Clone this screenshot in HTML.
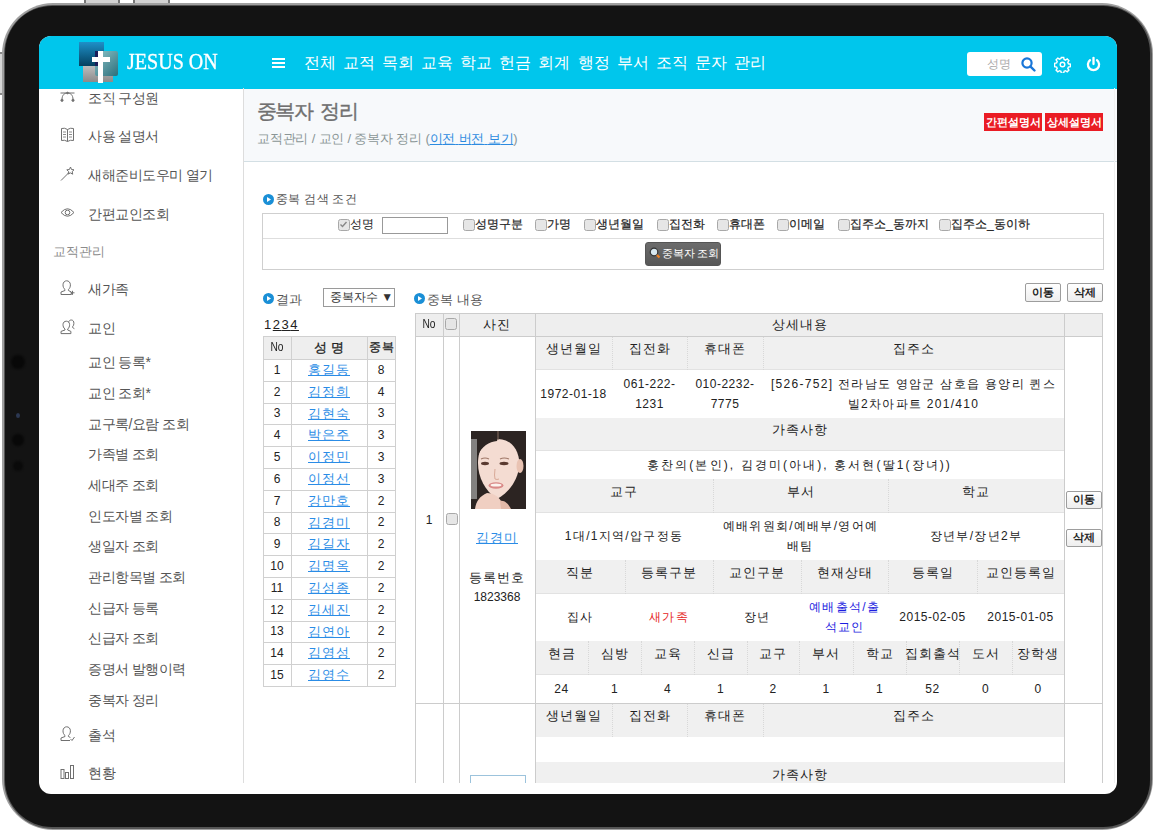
<!DOCTYPE html>
<html><head><meta charset="utf-8">
<style>
*{box-sizing:border-box;margin:0;padding:0}
html,body{width:1155px;height:832px;overflow:hidden;background:#fff;font-family:"Liberation Sans",sans-serif}
.a{position:absolute}
:root{--ls:0px}
i{font-style:normal;display:inline-block;width:calc(1em + var(--ls));text-align:center;text-decoration:inherit}
#tablet{left:5px;top:6px;width:1145px;height:821px;border-radius:47px;background:#131313}
#screen{left:39px;top:36px;width:1078px;height:758px;border-radius:12px;background:#fff;overflow:hidden}
#inner{left:-39px;top:-36px;width:1155px;height:832px}
#hdr{left:39px;top:36px;width:1078px;height:53px;background:#00c6ec}
.menu{top:52px;height:22px;line-height:22px;color:#fff;font-size:16px;white-space:nowrap}
.side{left:88px;height:20px;line-height:20px;font-size:14px;color:#555;white-space:nowrap;letter-spacing:-0.5px;--ls:-0.5px}
.t{display:flex;align-items:center;justify-content:center;white-space:nowrap;line-height:1.2}
.ico{left:60px;width:15px;height:15px}
</style></head>
<body>
<div class="a" style="left:84px;top:0;width:36px;height:5px;background:#d2d2d2;border-left:2px solid #777;border-right:2px solid #777"></div>
<div class="a" style="left:133px;top:0;width:37px;height:5px;background:#d2d2d2;border-left:2px solid #777;border-right:2px solid #777"></div>
<div class="a" style="left:0;top:52px;width:4px;height:43px;background:#d6d6d6;border-top:2px solid #888;border-bottom:2px solid #888"></div>
<div class="a" style="left:2px;top:3px;width:1151px;height:827px;border-radius:51px;background:#a0a0a0;filter:blur(0.7px)"></div><div class="a" style="left:3.5px;top:4.5px;width:1148px;height:824px;border-radius:49px;background:#555;filter:blur(0.6px)"></div><div id="tablet" class="a"></div>
<div class="a" style="left:11px;top:355px;width:14px;height:14px;border-radius:50%;background:#080808;filter:blur(1px)"></div>
<div class="a" style="left:16px;top:413px;width:4px;height:5px;border-radius:50%;background:#2c3852;filter:blur(0.6px)"></div>
<div class="a" style="left:12px;top:434px;width:12px;height:12px;border-radius:50%;background:#080808;filter:blur(1px)"></div>
<div class="a" style="left:13px;top:461px;width:10px;height:10px;border-radius:50%;background:#0a0a0a;filter:blur(1px)"></div>
<div id="screen" class="a">
<div id="inner" class="a">
  <!-- header -->
  <div id="hdr" class="a"></div>
  <!-- logo -->
  <div class="a" style="left:79px;top:42px;width:25px;height:24px;background:linear-gradient(#1e90c8,#04405f)"></div>
  <div class="a" style="left:83px;top:66px;width:30px;height:16px;background:linear-gradient(#bdbdbd,#8a8a8a)"></div>
  <div class="a" style="left:95px;top:51px;width:23px;height:25px;border-radius:2px;background:linear-gradient(135deg,#8fc4c8,#2b6f7c)"></div>
  <div class="a" style="left:95px;top:51px;width:4px;height:15px;background:#1b1e5a"></div>
  <div class="a" style="left:98px;top:51px;width:5px;height:32px;background:#fff"></div>
  <div class="a" style="left:92px;top:57px;width:18px;height:5px;background:#fff"></div>
  <div class="a" style="left:127px;top:46px;height:30px;line-height:30px;font-family:'Liberation Serif',serif;font-size:24px;color:#fff;letter-spacing:0px;--ls:0px;transform:scaleX(0.835);transform-origin:0 0;-webkit-text-stroke:0.35px #fff">JESUS ON</div>
  <!-- hamburger -->
  <div class="a" style="left:272px;top:58px;width:13px;height:2px;background:#fff;box-shadow:0 4px 0 #fff,0 8px 0 #fff"></div>
  <div class="a menu" style="left:304px"><i>전</i><i>체</i></div>
  <div class="a menu" style="left:343px"><i>교</i><i>적</i></div>
  <div class="a menu" style="left:382px"><i>목</i><i>회</i></div>
  <div class="a menu" style="left:421px"><i>교</i><i>육</i></div>
  <div class="a menu" style="left:460px"><i>학</i><i>교</i></div>
  <div class="a menu" style="left:499px"><i>헌</i><i>금</i></div>
  <div class="a menu" style="left:538px"><i>회</i><i>계</i></div>
  <div class="a menu" style="left:578px"><i>행</i><i>정</i></div>
  <div class="a menu" style="left:617px"><i>부</i><i>서</i></div>
  <div class="a menu" style="left:656px"><i>조</i><i>직</i></div>
  <div class="a menu" style="left:695px"><i>문</i><i>자</i></div>
  <div class="a menu" style="left:734px"><i>관</i><i>리</i></div>
  <!-- search -->
  <div class="a" style="left:967px;top:52px;width:75px;height:24px;background:#fff;border-radius:3px"></div>
  <div class="a" style="left:987px;top:55px;height:18px;line-height:18px;font-size:12px;color:#aaa"><i>성</i><i>명</i></div>
  <svg class="a" style="left:1020px;top:56px" width="17" height="17" viewBox="0 0 17 17"><circle cx="7" cy="7" r="4.6" fill="none" stroke="#1976d8" stroke-width="2.2"/><line x1="10.3" y1="10.3" x2="14.5" y2="14.5" stroke="#1976d8" stroke-width="2.4" stroke-linecap="round"/></svg>
  <svg class="a" style="left:1054px;top:56px" width="17" height="17" viewBox="0 0 17 17"><g fill="none" stroke="#fff" stroke-width="1.4"><circle cx="8.5" cy="8.5" r="2.3"/><path d="M7.3 1.5h2.4l.4 2 1.4.6 1.7-1.1 1.7 1.7-1.1 1.7.6 1.4 2 .4v2.4l-2 .4-.6 1.4 1.1 1.7-1.7 1.7-1.7-1.1-1.4.6-.4 2H7.3l-.4-2-1.4-.6-1.7 1.1-1.7-1.7 1.1-1.7-.6-1.4-2-.4V7.3l2-.4.6-1.4-1.1-1.7 1.7-1.7 1.7 1.1 1.4-.6z"/></g></svg>
  <svg class="a" style="left:1085px;top:56px" width="17" height="17" viewBox="0 0 17 17"><path d="M5 4.2A5.6 5.6 0 1 0 12 4.2" fill="none" stroke="#fff" stroke-width="2.3" stroke-linecap="round"/><line x1="8.5" y1="1.8" x2="8.5" y2="8" stroke="#fff" stroke-width="2.3" stroke-linecap="round"/></svg>

  <!-- sidebar -->
  <div class="a" style="left:243px;top:88px;width:1px;height:695px;background:#ddd"></div>
  <div class="a side" style="top:88px"><i>조</i><i>직</i> <i>구</i><i>성</i><i>원</i></div>
  <div class="a side" style="top:126px"><i>사</i><i>용</i> <i>설</i><i>명</i><i>서</i></div>
  <div class="a side" style="top:165px"><i>새</i><i>해</i><i>준</i><i>비</i><i>도</i><i>우</i><i>미</i> <i>열</i><i>기</i></div>
  <div class="a side" style="top:204px"><i>간</i><i>편</i><i>교</i><i>인</i><i>조</i><i>회</i></div>
  <div class="a side" style="left:53px;top:242px;font-size:13px;color:#8c8c8c;letter-spacing:0px;--ls:0px"><i>교</i><i>적</i><i>관</i><i>리</i></div>
  <div class="a side" style="top:279px"><i>새</i><i>가</i><i>족</i></div>
  <div class="a side" style="top:318px"><i>교</i><i>인</i></div>
  <div class="a side" style="top:352px"><i>교</i><i>인</i> <i>등</i><i>록</i>*</div>
  <div class="a side" style="top:383px"><i>교</i><i>인</i> <i>조</i><i>회</i>*</div>
  <div class="a side" style="top:414px"><i>교</i><i>구</i><i>록</i>/<i>요</i><i>람</i> <i>조</i><i>회</i></div>
  <div class="a side" style="top:444px"><i>가</i><i>족</i><i>별</i> <i>조</i><i>회</i></div>
  <div class="a side" style="top:475px"><i>세</i><i>대</i><i>주</i> <i>조</i><i>회</i></div>
  <div class="a side" style="top:506px"><i>인</i><i>도</i><i>자</i><i>별</i> <i>조</i><i>회</i></div>
  <div class="a side" style="top:536px"><i>생</i><i>일</i><i>자</i> <i>조</i><i>회</i></div>
  <div class="a side" style="top:567px"><i>관</i><i>리</i><i>항</i><i>목</i><i>별</i> <i>조</i><i>회</i></div>
  <div class="a side" style="top:598px"><i>신</i><i>급</i><i>자</i> <i>등</i><i>록</i></div>
  <div class="a side" style="top:628px"><i>신</i><i>급</i><i>자</i> <i>조</i><i>회</i></div>
  <div class="a side" style="top:659px"><i>증</i><i>명</i><i>서</i> <i>발</i><i>행</i><i>이</i><i>력</i></div>
  <div class="a side" style="top:690px"><i>중</i><i>복</i><i>자</i> <i>정</i><i>리</i></div>
  <div class="a side" style="top:725px"><i>출</i><i>석</i></div>
  <div class="a side" style="top:763px"><i>현</i><i>황</i></div>

  <!-- page header -->
  <div class="a" style="left:244px;top:89px;width:873px;height:73px;background:#f7f9fb;border-bottom:1px solid #d3dfe4"></div>
  <div class="a" style="left:257px;top:98px;height:26px;line-height:26px;font-size:20px;letter-spacing:-1.6px;--ls:-1.6px;word-spacing:4px;font-weight:normal;color:#707070;-webkit-text-stroke:0.4px #707070"><i>중</i><i>복</i><i>자</i> <i>정</i><i>리</i></div>
  <div class="a" style="left:257px;top:130px;height:18px;line-height:18px;font-size:13px;letter-spacing:-0.18px;--ls:-0.18px;color:#8a9696"><i>교</i><i>적</i><i>관</i><i>리</i> / <i>교</i><i>인</i> / <i>중</i><i>복</i><i>자</i> <i>정</i><i>리</i> (<span style="color:#2d8be0;text-decoration:underline"><i>이</i><i>전</i> <i>버</i><i>전</i> <i>보</i><i>기</i></span>)</div>
  <div class="a" style="left:984px;top:113px;width:58px;height:18px;background:#ea1c24;color:#fff;font-size:11px;font-weight:bold;line-height:18px;text-align:center"><i>간</i><i>편</i><i>설</i><i>명</i><i>서</i></div>
  <div class="a" style="left:1045px;top:113px;width:58px;height:18px;background:#ea1c24;color:#fff;font-size:11px;font-weight:bold;line-height:18px;text-align:center"><i>상</i><i>세</i><i>설</i><i>명</i><i>서</i></div>

  <div class="a" id="content" style="left:0;top:0;width:1155px;height:783px;overflow:hidden">
<svg class="a" style="left:60px;top:91px" width="15" height="11" viewBox="0 0 15 11"><g fill="none" stroke="#707070" stroke-width="1"><path d="M0.5 2h14"/><path d="M2 8.5C2 4 4.5 2 7.5 2S13 4 13 8.5"/><circle cx="2" cy="9.3" r="1.1" fill="#707070"/><circle cx="13" cy="9.3" r="1.1" fill="#707070"/><circle cx="7.5" cy="2" r="0.8" fill="#707070"/></g></svg>
<svg class="a" style="left:60px;top:127px" width="15" height="16" viewBox="0 0 15 16"><g fill="none" stroke="#707070" stroke-width="1"><path d="M1.5 1.5q3-1 6 1q3-2 6-1v12q-3-1-6 1q-3-2-6-1z"/><path d="M7.5 2.5v12"/><path d="M3 5h3M3 7.5h3M3 10h3M9 5h3M9 7.5h3M9 10h3" stroke-width="0.8"/></g></svg>
<svg class="a" style="left:60px;top:166px" width="15" height="16" viewBox="0 0 15 16"><g fill="none" stroke="#707070" stroke-width="1"><path d="M1 14.5L9 6.5"/><path d="M10.5 1l1 2.5 2.5.3-1.8 1.8.5 2.6-2.3-1.3-2.3 1.2.5-2.6L6.8 3.8l2.6-.3z"/></g></svg>
<svg class="a" style="left:60px;top:207px" width="15" height="11" viewBox="0 0 15 11"><g fill="none" stroke="#707070" stroke-width="1"><path d="M1 5.5Q7.5 -2 14 5.5Q7.5 13 1 5.5z"/><circle cx="7.5" cy="5.5" r="2.3"/></g></svg>
<svg class="a" style="left:60px;top:280px" width="15" height="16" viewBox="0 0 15 16"><g fill="none" stroke="#707070" stroke-width="1"><path d="M5 9.5C3.5 8.5 3 6.5 3 4.8 3 2.3 4.8 0.8 6.7 0.8S10.4 2.3 10.4 4.8c0 1.7-.5 3.7-2 4.7v1l3 1.5v2.5H1v-2.5l4-1.5z"/><path d="M10.5 12.8h4M12.5 10.8v4" stroke-width="1"/></g></svg>
<svg class="a" style="left:60px;top:319px" width="15" height="16" viewBox="0 0 15 16"><g fill="none" stroke="#707070" stroke-width="1"><path d="M8.5 3.2C9 1.7 10 1 11.3 1c1.6 0 2.6 1.3 2.6 3.3 0 1.3-.4 2.6-1.3 3.4v.8l1.8 1.2"/><path d="M5 10C3.5 9 3 7.2 3 5.6 3 3.4 4.5 2.2 6.3 2.2S9.6 3.4 9.6 5.6c0 1.6-.5 3.4-1.9 4.4v1l3.2 1.4v2.2H1v-2.2l4-1.4z"/></g></svg>
<svg class="a" style="left:60px;top:726px" width="15" height="16" viewBox="0 0 15 16"><g fill="none" stroke="#707070" stroke-width="1"><path d="M5 9.5C3.5 8.5 3 6.5 3 4.8 3 2.3 4.8 0.8 6.7 0.8S10.4 2.3 10.4 4.8c0 1.7-.5 3.7-2 4.7v1l2 1"/><path d="M5 9.5v1l-4 1.5v2.5h9"/><path d="M10.5 13l1.5 1.5 2.5-3.5" stroke-width="1"/></g></svg>
<svg class="a" style="left:60px;top:765px" width="15" height="15" viewBox="0 0 15 15"><g fill="none" stroke="#707070" stroke-width="1"><rect x="1" y="4.5" width="3" height="9"/><rect x="5.5" y="7.5" width="3" height="6"/><rect x="10.5" y="0.5" width="3" height="13"/></g></svg>
<svg class="a" style="left:263px;top:194px" width="11" height="11" viewBox="0 0 11 11"><circle cx="5.5" cy="5.5" r="5.5" fill="#1a8fd6"/><path d="M4 3v5l4-2.5z" fill="#fff"/></svg>
<div class="a t" style="left:276px;top:190px;width:124px;height:18px;text-align:left;justify-content:flex-start;color:#555;font-size:12px;letter-spacing:0.3px;--ls:0.3px"><span><i>중</i><i>복</i> <i>검</i><i>색</i> <i>조</i><i>건</i></span></div>
<div class="a" style="left:262px;top:213px;width:842px;height:57px;border:1px solid #cfcfcf"></div>
<div class="a" style="left:263px;top:238px;width:840px;height:1px;background:#dedede"></div>
<svg class="a" style="left:338px;top:219px" width="12" height="12" viewBox="0 0 12 12"><rect x="0.5" y="0.5" width="11" height="11" rx="2" fill="#e6e6e6" stroke="#a8a8a8"/><path d="M2.5 5.5l2 2 4-4.5" fill="none" stroke="#888" stroke-width="1.4"/></svg>
<div class="a t" style="left:350px;top:214px;width:30px;height:20px;text-align:left;justify-content:flex-start;color:#222;font-size:12px"><span><i>성</i><i>명</i></span></div>
<div class="a" style="left:382px;top:217px;width:66px;height:17px;border:1px solid #999;background:#fff"></div>
<svg class="a" style="left:463px;top:219px" width="12" height="12" viewBox="0 0 12 12"><rect x="0.5" y="0.5" width="11" height="11" rx="2" fill="#e6e6e6" stroke="#a8a8a8"/></svg>
<div class="a t" style="left:475px;top:214px;width:88px;height:20px;text-align:left;justify-content:flex-start;color:#222;font-size:12px;-webkit-text-stroke:0.2px #222"><span><i>성</i><i>명</i><i>구</i><i>분</i></span></div>
<svg class="a" style="left:535px;top:219px" width="12" height="12" viewBox="0 0 12 12"><rect x="0.5" y="0.5" width="11" height="11" rx="2" fill="#e6e6e6" stroke="#a8a8a8"/></svg>
<div class="a t" style="left:547px;top:214px;width:88px;height:20px;text-align:left;justify-content:flex-start;color:#222;font-size:12px;-webkit-text-stroke:0.2px #222"><span><i>가</i><i>명</i></span></div>
<svg class="a" style="left:584px;top:219px" width="12" height="12" viewBox="0 0 12 12"><rect x="0.5" y="0.5" width="11" height="11" rx="2" fill="#e6e6e6" stroke="#a8a8a8"/></svg>
<div class="a t" style="left:596px;top:214px;width:88px;height:20px;text-align:left;justify-content:flex-start;color:#222;font-size:12px;-webkit-text-stroke:0.2px #222"><span><i>생</i><i>년</i><i>월</i><i>일</i></span></div>
<svg class="a" style="left:657px;top:219px" width="12" height="12" viewBox="0 0 12 12"><rect x="0.5" y="0.5" width="11" height="11" rx="2" fill="#e6e6e6" stroke="#a8a8a8"/></svg>
<div class="a t" style="left:669px;top:214px;width:88px;height:20px;text-align:left;justify-content:flex-start;color:#222;font-size:12px;-webkit-text-stroke:0.2px #222"><span><i>집</i><i>전</i><i>화</i></span></div>
<svg class="a" style="left:717px;top:219px" width="12" height="12" viewBox="0 0 12 12"><rect x="0.5" y="0.5" width="11" height="11" rx="2" fill="#e6e6e6" stroke="#a8a8a8"/></svg>
<div class="a t" style="left:729px;top:214px;width:88px;height:20px;text-align:left;justify-content:flex-start;color:#222;font-size:12px;-webkit-text-stroke:0.2px #222"><span><i>휴</i><i>대</i><i>폰</i></span></div>
<svg class="a" style="left:777px;top:219px" width="12" height="12" viewBox="0 0 12 12"><rect x="0.5" y="0.5" width="11" height="11" rx="2" fill="#e6e6e6" stroke="#a8a8a8"/></svg>
<div class="a t" style="left:789px;top:214px;width:88px;height:20px;text-align:left;justify-content:flex-start;color:#222;font-size:12px;-webkit-text-stroke:0.2px #222"><span><i>이</i><i>메</i><i>일</i></span></div>
<svg class="a" style="left:838px;top:219px" width="12" height="12" viewBox="0 0 12 12"><rect x="0.5" y="0.5" width="11" height="11" rx="2" fill="#e6e6e6" stroke="#a8a8a8"/></svg>
<div class="a t" style="left:850px;top:214px;width:88px;height:20px;text-align:left;justify-content:flex-start;color:#222;font-size:12px;-webkit-text-stroke:0.2px #222"><span><i>집</i><i>주</i><i>소</i>_<i>동</i><i>까</i><i>지</i></span></div>
<svg class="a" style="left:939px;top:219px" width="12" height="12" viewBox="0 0 12 12"><rect x="0.5" y="0.5" width="11" height="11" rx="2" fill="#e6e6e6" stroke="#a8a8a8"/></svg>
<div class="a t" style="left:951px;top:214px;width:88px;height:20px;text-align:left;justify-content:flex-start;color:#222;font-size:12px;-webkit-text-stroke:0.2px #222"><span><i>집</i><i>주</i><i>소</i>_<i>동</i><i>이</i><i>하</i></span></div>
<div class="a" style="left:645px;top:242px;width:76px;height:24px;background:linear-gradient(#6c6c6c,#575757);border-radius:3px;border:1px solid #555"></div>
<svg class="a" style="left:649px;top:247px" width="13" height="13" viewBox="0 0 13 13"><circle cx="5" cy="5" r="3.8" fill="#d8e8f0" stroke="#333" stroke-width="1.2"/><line x1="8" y1="8" x2="10.5" y2="10.5" stroke="#f08020" stroke-width="2.2"/></svg>
<div class="a t" style="left:662px;top:244px;width:68px;height:20px;text-align:left;justify-content:flex-start;color:#fff;font-size:11px;letter-spacing:-0.2px;--ls:-0.2px"><span><i>중</i><i>복</i><i>자</i> <i>조</i><i>회</i></span></div>
<svg class="a" style="left:263px;top:293px" width="11" height="11" viewBox="0 0 11 11"><circle cx="5.5" cy="5.5" r="5.5" fill="#1a8fd6"/><path d="M4 3v5l4-2.5z" fill="#fff"/></svg>
<div class="a t" style="left:276px;top:290px;width:44px;height:19px;text-align:left;justify-content:flex-start;color:#555;font-size:13px"><span><i>결</i><i>과</i></span></div>
<div class="a" style="left:323px;top:288px;width:72px;height:19px;border:1px solid #9a9a9a;background:#fff"></div>
<div class="a t" style="left:330px;top:289px;width:63px;height:17px;text-align:left;justify-content:flex-start;color:#333;font-size:12px"><span><i>중</i><i>복</i><i>자</i><i>수</i> ▼</span></div>
<svg class="a" style="left:414px;top:293px" width="11" height="11" viewBox="0 0 11 11"><circle cx="5.5" cy="5.5" r="5.5" fill="#1a8fd6"/><path d="M4 3v5l4-2.5z" fill="#fff"/></svg>
<div class="a t" style="left:427px;top:290px;width:73px;height:19px;text-align:left;justify-content:flex-start;color:#555;font-size:13px"><span><i>중</i><i>복</i> <i>내</i><i>용</i></span></div>
<div class="a t" style="left:264px;top:315px;width:46px;height:19px;text-align:left;justify-content:flex-start;color:#222;font-size:13px;letter-spacing:1.5px;--ls:1.5px"><span>1<u>2</u><u>3</u><u>4</u></span></div>
<div class="a" style="left:1025px;top:283px;width:36px;height:19px;border:1px solid #9d9d9d;border-radius:2px;background:linear-gradient(#fff,#eee)"></div>
<div class="a t" style="left:1025px;top:283px;width:36px;height:19px;text-align:center;justify-content:center;color:#222;font-size:11px;font-weight:bold"><span><i>이</i><i>동</i></span></div>
<div class="a" style="left:1067px;top:283px;width:36px;height:19px;border:1px solid #9d9d9d;border-radius:2px;background:linear-gradient(#fff,#eee)"></div>
<div class="a t" style="left:1067px;top:283px;width:36px;height:19px;text-align:center;justify-content:center;color:#222;font-size:11px;font-weight:bold"><span><i>삭</i><i>제</i></span></div>
<div class="a" style="left:263px;top:336px;width:133px;height:23px;background:#eee"></div>
<div class="a" style="left:263px;top:336px;width:133px;height:1px;background:#d0d0d0"></div>
<div class="a" style="left:263px;top:359px;width:133px;height:1px;background:#d0d0d0"></div>
<div class="a" style="left:263px;top:381px;width:133px;height:1px;background:#d0d0d0"></div>
<div class="a" style="left:263px;top:403px;width:133px;height:1px;background:#d0d0d0"></div>
<div class="a" style="left:263px;top:424px;width:133px;height:1px;background:#d0d0d0"></div>
<div class="a" style="left:263px;top:446px;width:133px;height:1px;background:#d0d0d0"></div>
<div class="a" style="left:263px;top:468px;width:133px;height:1px;background:#d0d0d0"></div>
<div class="a" style="left:263px;top:490px;width:133px;height:1px;background:#d0d0d0"></div>
<div class="a" style="left:263px;top:512px;width:133px;height:1px;background:#d0d0d0"></div>
<div class="a" style="left:263px;top:533px;width:133px;height:1px;background:#d0d0d0"></div>
<div class="a" style="left:263px;top:555px;width:133px;height:1px;background:#d0d0d0"></div>
<div class="a" style="left:263px;top:577px;width:133px;height:1px;background:#d0d0d0"></div>
<div class="a" style="left:263px;top:599px;width:133px;height:1px;background:#d0d0d0"></div>
<div class="a" style="left:263px;top:621px;width:133px;height:1px;background:#d0d0d0"></div>
<div class="a" style="left:263px;top:642px;width:133px;height:1px;background:#d0d0d0"></div>
<div class="a" style="left:263px;top:664px;width:133px;height:1px;background:#d0d0d0"></div>
<div class="a" style="left:263px;top:686px;width:133px;height:1px;background:#d0d0d0"></div>
<div class="a" style="left:263px;top:336px;width:1px;height:351px;background:#d0d0d0"></div>
<div class="a" style="left:291px;top:336px;width:1px;height:351px;background:#d0d0d0"></div>
<div class="a" style="left:367px;top:336px;width:1px;height:351px;background:#d0d0d0"></div>
<div class="a" style="left:395px;top:336px;width:1px;height:351px;background:#d0d0d0"></div>
<div class="a t" style="left:263px;top:336px;width:28px;height:23px;text-align:center;justify-content:center;color:#222;font-size:12px;transform:scaleX(0.85)"><span>No</span></div>
<div class="a t" style="left:291px;top:336px;width:76px;height:23px;text-align:center;justify-content:center;color:#222;font-size:13px;-webkit-text-stroke:0.3px #222"><span><i>성</i> <i>명</i></span></div>
<div class="a t" style="left:367px;top:336px;width:28px;height:23px;text-align:center;justify-content:center;color:#222;font-size:12px;-webkit-text-stroke:0.3px #222;letter-spacing:-1px;--ls:-1px"><span><i>중</i> <i>복</i></span></div>
<div class="a t" style="left:263px;top:359px;width:28px;height:22px;text-align:center;justify-content:center;color:#222;font-size:12px"><span>1</span></div>
<div class="a t" style="left:291px;top:359px;width:76px;height:22px;text-align:center;justify-content:center;color:#2a8ce6;font-size:13px;text-decoration:underline;letter-spacing:1px;--ls:1px"><span style="text-decoration:underline"><i>홍</i><i>길</i><i>동</i></span></div>
<div class="a t" style="left:367px;top:359px;width:28px;height:22px;text-align:center;justify-content:center;color:#222;font-size:12px"><span>8</span></div>
<div class="a t" style="left:263px;top:381px;width:28px;height:22px;text-align:center;justify-content:center;color:#222;font-size:12px"><span>2</span></div>
<div class="a t" style="left:291px;top:381px;width:76px;height:22px;text-align:center;justify-content:center;color:#2a8ce6;font-size:13px;text-decoration:underline;letter-spacing:1px;--ls:1px"><span style="text-decoration:underline"><i>김</i><i>정</i><i>희</i></span></div>
<div class="a t" style="left:367px;top:381px;width:28px;height:22px;text-align:center;justify-content:center;color:#222;font-size:12px"><span>4</span></div>
<div class="a t" style="left:263px;top:403px;width:28px;height:21px;text-align:center;justify-content:center;color:#222;font-size:12px"><span>3</span></div>
<div class="a t" style="left:291px;top:403px;width:76px;height:21px;text-align:center;justify-content:center;color:#2a8ce6;font-size:13px;text-decoration:underline;letter-spacing:1px;--ls:1px"><span style="text-decoration:underline"><i>김</i><i>현</i><i>숙</i></span></div>
<div class="a t" style="left:367px;top:403px;width:28px;height:21px;text-align:center;justify-content:center;color:#222;font-size:12px"><span>3</span></div>
<div class="a t" style="left:263px;top:424px;width:28px;height:22px;text-align:center;justify-content:center;color:#222;font-size:12px"><span>4</span></div>
<div class="a t" style="left:291px;top:424px;width:76px;height:22px;text-align:center;justify-content:center;color:#2a8ce6;font-size:13px;text-decoration:underline;letter-spacing:1px;--ls:1px"><span style="text-decoration:underline"><i>박</i><i>은</i><i>주</i></span></div>
<div class="a t" style="left:367px;top:424px;width:28px;height:22px;text-align:center;justify-content:center;color:#222;font-size:12px"><span>3</span></div>
<div class="a t" style="left:263px;top:446px;width:28px;height:22px;text-align:center;justify-content:center;color:#222;font-size:12px"><span>5</span></div>
<div class="a t" style="left:291px;top:446px;width:76px;height:22px;text-align:center;justify-content:center;color:#2a8ce6;font-size:13px;text-decoration:underline;letter-spacing:1px;--ls:1px"><span style="text-decoration:underline"><i>이</i><i>정</i><i>민</i></span></div>
<div class="a t" style="left:367px;top:446px;width:28px;height:22px;text-align:center;justify-content:center;color:#222;font-size:12px"><span>3</span></div>
<div class="a t" style="left:263px;top:468px;width:28px;height:22px;text-align:center;justify-content:center;color:#222;font-size:12px"><span>6</span></div>
<div class="a t" style="left:291px;top:468px;width:76px;height:22px;text-align:center;justify-content:center;color:#2a8ce6;font-size:13px;text-decoration:underline;letter-spacing:1px;--ls:1px"><span style="text-decoration:underline"><i>이</i><i>정</i><i>선</i></span></div>
<div class="a t" style="left:367px;top:468px;width:28px;height:22px;text-align:center;justify-content:center;color:#222;font-size:12px"><span>3</span></div>
<div class="a t" style="left:263px;top:490px;width:28px;height:22px;text-align:center;justify-content:center;color:#222;font-size:12px"><span>7</span></div>
<div class="a t" style="left:291px;top:490px;width:76px;height:22px;text-align:center;justify-content:center;color:#2a8ce6;font-size:13px;text-decoration:underline;letter-spacing:1px;--ls:1px"><span style="text-decoration:underline"><i>강</i><i>만</i><i>호</i></span></div>
<div class="a t" style="left:367px;top:490px;width:28px;height:22px;text-align:center;justify-content:center;color:#222;font-size:12px"><span>2</span></div>
<div class="a t" style="left:263px;top:512px;width:28px;height:21px;text-align:center;justify-content:center;color:#222;font-size:12px"><span>8</span></div>
<div class="a t" style="left:291px;top:512px;width:76px;height:21px;text-align:center;justify-content:center;color:#2a8ce6;font-size:13px;text-decoration:underline;letter-spacing:1px;--ls:1px"><span style="text-decoration:underline"><i>김</i><i>경</i><i>미</i></span></div>
<div class="a t" style="left:367px;top:512px;width:28px;height:21px;text-align:center;justify-content:center;color:#222;font-size:12px"><span>2</span></div>
<div class="a t" style="left:263px;top:533px;width:28px;height:22px;text-align:center;justify-content:center;color:#222;font-size:12px"><span>9</span></div>
<div class="a t" style="left:291px;top:533px;width:76px;height:22px;text-align:center;justify-content:center;color:#2a8ce6;font-size:13px;text-decoration:underline;letter-spacing:1px;--ls:1px"><span style="text-decoration:underline"><i>김</i><i>길</i><i>자</i></span></div>
<div class="a t" style="left:367px;top:533px;width:28px;height:22px;text-align:center;justify-content:center;color:#222;font-size:12px"><span>2</span></div>
<div class="a t" style="left:263px;top:555px;width:28px;height:22px;text-align:center;justify-content:center;color:#222;font-size:12px"><span>10</span></div>
<div class="a t" style="left:291px;top:555px;width:76px;height:22px;text-align:center;justify-content:center;color:#2a8ce6;font-size:13px;text-decoration:underline;letter-spacing:1px;--ls:1px"><span style="text-decoration:underline"><i>김</i><i>명</i><i>옥</i></span></div>
<div class="a t" style="left:367px;top:555px;width:28px;height:22px;text-align:center;justify-content:center;color:#222;font-size:12px"><span>2</span></div>
<div class="a t" style="left:263px;top:577px;width:28px;height:22px;text-align:center;justify-content:center;color:#222;font-size:12px"><span>11</span></div>
<div class="a t" style="left:291px;top:577px;width:76px;height:22px;text-align:center;justify-content:center;color:#2a8ce6;font-size:13px;text-decoration:underline;letter-spacing:1px;--ls:1px"><span style="text-decoration:underline"><i>김</i><i>성</i><i>종</i></span></div>
<div class="a t" style="left:367px;top:577px;width:28px;height:22px;text-align:center;justify-content:center;color:#222;font-size:12px"><span>2</span></div>
<div class="a t" style="left:263px;top:599px;width:28px;height:22px;text-align:center;justify-content:center;color:#222;font-size:12px"><span>12</span></div>
<div class="a t" style="left:291px;top:599px;width:76px;height:22px;text-align:center;justify-content:center;color:#2a8ce6;font-size:13px;text-decoration:underline;letter-spacing:1px;--ls:1px"><span style="text-decoration:underline"><i>김</i><i>세</i><i>진</i></span></div>
<div class="a t" style="left:367px;top:599px;width:28px;height:22px;text-align:center;justify-content:center;color:#222;font-size:12px"><span>2</span></div>
<div class="a t" style="left:263px;top:621px;width:28px;height:21px;text-align:center;justify-content:center;color:#222;font-size:12px"><span>13</span></div>
<div class="a t" style="left:291px;top:621px;width:76px;height:21px;text-align:center;justify-content:center;color:#2a8ce6;font-size:13px;text-decoration:underline;letter-spacing:1px;--ls:1px"><span style="text-decoration:underline"><i>김</i><i>연</i><i>아</i></span></div>
<div class="a t" style="left:367px;top:621px;width:28px;height:21px;text-align:center;justify-content:center;color:#222;font-size:12px"><span>2</span></div>
<div class="a t" style="left:263px;top:642px;width:28px;height:22px;text-align:center;justify-content:center;color:#222;font-size:12px"><span>14</span></div>
<div class="a t" style="left:291px;top:642px;width:76px;height:22px;text-align:center;justify-content:center;color:#2a8ce6;font-size:13px;text-decoration:underline;letter-spacing:1px;--ls:1px"><span style="text-decoration:underline"><i>김</i><i>영</i><i>성</i></span></div>
<div class="a t" style="left:367px;top:642px;width:28px;height:22px;text-align:center;justify-content:center;color:#222;font-size:12px"><span>2</span></div>
<div class="a t" style="left:263px;top:664px;width:28px;height:22px;text-align:center;justify-content:center;color:#222;font-size:12px"><span>15</span></div>
<div class="a t" style="left:291px;top:664px;width:76px;height:22px;text-align:center;justify-content:center;color:#2a8ce6;font-size:13px;text-decoration:underline;letter-spacing:1px;--ls:1px"><span style="text-decoration:underline"><i>김</i><i>영</i><i>수</i></span></div>
<div class="a t" style="left:367px;top:664px;width:28px;height:22px;text-align:center;justify-content:center;color:#222;font-size:12px"><span>2</span></div>
<div class="a" style="left:415px;top:313px;width:688px;height:23px;background:#eee"></div>
<div class="a" style="left:415px;top:313px;width:688px;height:1px;background:#ccc"></div>
<div class="a" style="left:415px;top:336px;width:688px;height:1px;background:#ccc"></div>
<div class="a" style="left:415px;top:703px;width:688px;height:1px;background:#ccc"></div>
<div class="a" style="left:415px;top:313px;width:1px;height:477px;background:#ccc"></div>
<div class="a" style="left:443px;top:313px;width:1px;height:477px;background:#ccc"></div>
<div class="a" style="left:459px;top:313px;width:1px;height:477px;background:#ccc"></div>
<div class="a" style="left:535px;top:313px;width:1px;height:477px;background:#ccc"></div>
<div class="a" style="left:1064px;top:313px;width:1px;height:477px;background:#ccc"></div>
<div class="a" style="left:1102px;top:313px;width:1px;height:477px;background:#ccc"></div>
<div class="a t" style="left:415px;top:313px;width:28px;height:23px;text-align:center;justify-content:center;color:#222;font-size:12px;transform:scaleX(0.85)"><span>No</span></div>
<svg class="a" style="left:445px;top:318px" width="12" height="12" viewBox="0 0 12 12"><rect x="0.5" y="0.5" width="11" height="11" rx="2" fill="#e6e6e6" stroke="#a8a8a8"/></svg>
<div class="a t" style="left:459px;top:313px;width:76px;height:23px;text-align:center;justify-content:center;color:#222;font-size:13px;letter-spacing:1px;--ls:1px"><span><i>사</i><i>진</i></span></div>
<div class="a t" style="left:535px;top:313px;width:529px;height:23px;text-align:center;justify-content:center;color:#222;font-size:13px;letter-spacing:1px;--ls:1px"><span><i>상</i><i>세</i><i>내</i><i>용</i></span></div>
<div class="a" style="left:536px;top:337px;width:528px;height:33px;background:#f0f0f0;border-bottom:1px solid #e2e2e2"></div>
<div class="a t" style="left:535px;top:336px;width:77px;height:26px;text-align:center;justify-content:center;color:#222;font-size:13px;letter-spacing:1px;--ls:1px"><span><i>생</i><i>년</i><i>월</i><i>일</i></span></div>
<div class="a t" style="left:535px;top:370px;width:77px;height:47px;text-align:center;justify-content:center;color:#222;font-size:12px;line-height:20px;letter-spacing:0.5px;--ls:0.5px"><span>1972-01-18</span></div>
<div class="a" style="left:612px;top:337px;width:1px;height:33px;border-left:1px dotted #d8d8d8"></div>
<div class="a t" style="left:612px;top:336px;width:75px;height:26px;text-align:center;justify-content:center;color:#222;font-size:13px;letter-spacing:1px;--ls:1px"><span><i>집</i><i>전</i><i>화</i></span></div>
<div class="a t" style="left:612px;top:370px;width:75px;height:47px;text-align:center;justify-content:center;color:#222;font-size:12px;line-height:20px;letter-spacing:0.5px;--ls:0.5px"><span>061-222-<br>1231</span></div>
<div class="a" style="left:687px;top:337px;width:1px;height:33px;border-left:1px dotted #d8d8d8"></div>
<div class="a t" style="left:687px;top:336px;width:76px;height:26px;text-align:center;justify-content:center;color:#222;font-size:13px;letter-spacing:1px;--ls:1px"><span><i>휴</i><i>대</i><i>폰</i></span></div>
<div class="a t" style="left:687px;top:370px;width:76px;height:47px;text-align:center;justify-content:center;color:#222;font-size:12px;line-height:20px;letter-spacing:0.5px;--ls:0.5px"><span>010-2232-<br>7775</span></div>
<div class="a" style="left:763px;top:337px;width:1px;height:33px;border-left:1px dotted #d8d8d8"></div>
<div class="a t" style="left:763px;top:336px;width:301px;height:26px;text-align:center;justify-content:center;color:#222;font-size:13px;letter-spacing:1px;--ls:1px"><span><i>집</i><i>주</i><i>소</i></span></div>
<div class="a t" style="left:763px;top:370px;width:301px;height:47px;text-align:center;justify-content:center;color:#222;font-size:12px;line-height:20px;letter-spacing:1.3px;--ls:1.3px"><span>[526-752] <i>전</i><i>라</i><i>남</i><i>도</i> <i>영</i><i>암</i><i>군</i> <i>삼</i><i>호</i><i>읍</i> <i>용</i><i>앙</i><i>리</i> <i>퀸</i><i>스</i><br><i>빌</i>2<i>차</i><i>아</i><i>파</i><i>트</i> 201/410</span></div>
<div class="a" style="left:536px;top:418px;width:528px;height:33px;background:#f0f0f0;border-bottom:1px solid #e2e2e2"></div>
<div class="a t" style="left:535px;top:417px;width:529px;height:26px;text-align:center;justify-content:center;color:#222;font-size:13px;letter-spacing:1px;--ls:1px"><span><i>가</i><i>족</i><i>사</i><i>항</i></span></div>
<div class="a t" style="left:535px;top:451px;width:529px;height:27px;text-align:center;justify-content:center;color:#222;font-size:12px;line-height:20px;letter-spacing:2.1px;--ls:2.1px"><span><i>홍</i><i>찬</i><i>의</i>(<i>본</i><i>인</i>), <i>김</i><i>경</i><i>미</i>(<i>아</i><i>내</i>), <i>홍</i><i>서</i><i>현</i>(<i>딸</i>1(<i>장</i><i>녀</i>))</span></div>
<div class="a" style="left:536px;top:479px;width:528px;height:34px;background:#f0f0f0;border-bottom:1px solid #e2e2e2"></div>
<div class="a t" style="left:535px;top:478px;width:178px;height:27px;text-align:center;justify-content:center;color:#222;font-size:13px;letter-spacing:1px;--ls:1px"><span><i>교</i><i>구</i></span></div>
<div class="a t" style="left:535px;top:513px;width:178px;height:46px;text-align:center;justify-content:center;color:#222;font-size:12px;line-height:20px;letter-spacing:1.3px;--ls:1.3px"><span>1<i>대</i>/1<i>지</i><i>역</i>/<i>압</i><i>구</i><i>정</i><i>동</i></span></div>
<div class="a" style="left:713px;top:479px;width:1px;height:34px;border-left:1px dotted #d8d8d8"></div>
<div class="a t" style="left:713px;top:478px;width:175px;height:27px;text-align:center;justify-content:center;color:#222;font-size:13px;letter-spacing:1px;--ls:1px"><span><i>부</i><i>서</i></span></div>
<div class="a t" style="left:713px;top:513px;width:175px;height:46px;text-align:center;justify-content:center;color:#222;font-size:12px;line-height:20px;letter-spacing:1.3px;--ls:1.3px"><span><i>예</i><i>배</i><i>위</i><i>원</i><i>회</i>/<i>예</i><i>배</i><i>부</i>/<i>영</i><i>어</i><i>예</i><br><i>배</i><i>팀</i></span></div>
<div class="a" style="left:888px;top:479px;width:1px;height:34px;border-left:1px dotted #d8d8d8"></div>
<div class="a t" style="left:888px;top:478px;width:176px;height:27px;text-align:center;justify-content:center;color:#222;font-size:13px;letter-spacing:1px;--ls:1px"><span><i>학</i><i>교</i></span></div>
<div class="a t" style="left:888px;top:513px;width:176px;height:46px;text-align:center;justify-content:center;color:#222;font-size:12px;line-height:20px;letter-spacing:1.3px;--ls:1.3px"><span><i>장</i><i>년</i><i>부</i>/<i>장</i><i>년</i>2<i>부</i></span></div>
<div class="a" style="left:536px;top:560px;width:528px;height:34px;background:#f0f0f0;border-bottom:1px solid #e2e2e2"></div>
<div class="a t" style="left:535px;top:559px;width:90px;height:27px;text-align:center;justify-content:center;color:#222;font-size:13px;letter-spacing:1px;--ls:1px"><span><i>직</i><i>분</i></span></div>
<div class="a t" style="left:535px;top:594px;width:90px;height:46px;text-align:center;justify-content:center;color:#222;font-size:12px;line-height:20px;letter-spacing:1.3px;--ls:1.3px"><span><i>집</i><i>사</i></span></div>
<div class="a" style="left:625px;top:560px;width:1px;height:34px;border-left:1px dotted #d8d8d8"></div>
<div class="a t" style="left:625px;top:559px;width:88px;height:27px;text-align:center;justify-content:center;color:#222;font-size:13px;letter-spacing:1px;--ls:1px"><span><i>등</i><i>록</i><i>구</i><i>분</i></span></div>
<div class="a t" style="left:625px;top:594px;width:88px;height:46px;text-align:center;justify-content:center;color:#e51c1c;font-size:12px;line-height:20px;letter-spacing:1.3px;--ls:1.3px"><span><i>새</i><i>가</i><i>족</i></span></div>
<div class="a" style="left:713px;top:560px;width:1px;height:34px;border-left:1px dotted #d8d8d8"></div>
<div class="a t" style="left:713px;top:559px;width:88px;height:27px;text-align:center;justify-content:center;color:#222;font-size:13px;letter-spacing:1px;--ls:1px"><span><i>교</i><i>인</i><i>구</i><i>분</i></span></div>
<div class="a t" style="left:713px;top:594px;width:88px;height:46px;text-align:center;justify-content:center;color:#222;font-size:12px;line-height:20px;letter-spacing:1.3px;--ls:1.3px"><span><i>장</i><i>년</i></span></div>
<div class="a" style="left:801px;top:560px;width:1px;height:34px;border-left:1px dotted #d8d8d8"></div>
<div class="a t" style="left:801px;top:559px;width:87px;height:27px;text-align:center;justify-content:center;color:#222;font-size:13px;letter-spacing:1px;--ls:1px"><span><i>현</i><i>재</i><i>상</i><i>태</i></span></div>
<div class="a t" style="left:801px;top:594px;width:87px;height:46px;text-align:center;justify-content:center;color:#1c1ce0;font-size:12px;line-height:20px;letter-spacing:1.3px;--ls:1.3px"><span><i>예</i><i>배</i><i>출</i><i>석</i>/<i>출</i><br><i>석</i><i>교</i><i>인</i></span></div>
<div class="a" style="left:888px;top:560px;width:1px;height:34px;border-left:1px dotted #d8d8d8"></div>
<div class="a t" style="left:888px;top:559px;width:89px;height:27px;text-align:center;justify-content:center;color:#222;font-size:13px;letter-spacing:1px;--ls:1px"><span><i>등</i><i>록</i><i>일</i></span></div>
<div class="a t" style="left:888px;top:594px;width:89px;height:46px;text-align:center;justify-content:center;color:#222;font-size:12px;line-height:20px;letter-spacing:0.5px;--ls:0.5px"><span>2015-02-05</span></div>
<div class="a" style="left:977px;top:560px;width:1px;height:34px;border-left:1px dotted #d8d8d8"></div>
<div class="a t" style="left:977px;top:559px;width:87px;height:27px;text-align:center;justify-content:center;color:#222;font-size:13px;letter-spacing:1px;--ls:1px"><span><i>교</i><i>인</i><i>등</i><i>록</i><i>일</i></span></div>
<div class="a t" style="left:977px;top:594px;width:87px;height:46px;text-align:center;justify-content:center;color:#222;font-size:12px;line-height:20px;letter-spacing:0.5px;--ls:0.5px"><span>2015-01-05</span></div>
<div class="a" style="left:536px;top:641px;width:528px;height:34px;background:#f0f0f0;border-bottom:1px solid #e2e2e2"></div>
<div class="a t" style="left:535px;top:640px;width:53px;height:27px;text-align:center;justify-content:center;color:#222;font-size:13px;letter-spacing:1px;--ls:1px"><span><i>현</i><i>금</i></span></div>
<div class="a t" style="left:535px;top:675px;width:53px;height:28px;text-align:center;justify-content:center;color:#222;font-size:12px;line-height:20px;letter-spacing:0.5px;--ls:0.5px"><span>24</span></div>
<div class="a" style="left:588px;top:641px;width:1px;height:34px;border-left:1px dotted #d8d8d8"></div>
<div class="a t" style="left:588px;top:640px;width:53px;height:27px;text-align:center;justify-content:center;color:#222;font-size:13px;letter-spacing:1px;--ls:1px"><span><i>심</i><i>방</i></span></div>
<div class="a t" style="left:588px;top:675px;width:53px;height:28px;text-align:center;justify-content:center;color:#222;font-size:12px;line-height:20px;letter-spacing:0.5px;--ls:0.5px"><span>1</span></div>
<div class="a" style="left:641px;top:641px;width:1px;height:34px;border-left:1px dotted #d8d8d8"></div>
<div class="a t" style="left:641px;top:640px;width:53px;height:27px;text-align:center;justify-content:center;color:#222;font-size:13px;letter-spacing:1px;--ls:1px"><span><i>교</i><i>육</i></span></div>
<div class="a t" style="left:641px;top:675px;width:53px;height:28px;text-align:center;justify-content:center;color:#222;font-size:12px;line-height:20px;letter-spacing:0.5px;--ls:0.5px"><span>4</span></div>
<div class="a" style="left:694px;top:641px;width:1px;height:34px;border-left:1px dotted #d8d8d8"></div>
<div class="a t" style="left:694px;top:640px;width:53px;height:27px;text-align:center;justify-content:center;color:#222;font-size:13px;letter-spacing:1px;--ls:1px"><span><i>신</i><i>급</i></span></div>
<div class="a t" style="left:694px;top:675px;width:53px;height:28px;text-align:center;justify-content:center;color:#222;font-size:12px;line-height:20px;letter-spacing:0.5px;--ls:0.5px"><span>1</span></div>
<div class="a" style="left:747px;top:641px;width:1px;height:34px;border-left:1px dotted #d8d8d8"></div>
<div class="a t" style="left:747px;top:640px;width:52px;height:27px;text-align:center;justify-content:center;color:#222;font-size:13px;letter-spacing:1px;--ls:1px"><span><i>교</i><i>구</i></span></div>
<div class="a t" style="left:747px;top:675px;width:52px;height:28px;text-align:center;justify-content:center;color:#222;font-size:12px;line-height:20px;letter-spacing:0.5px;--ls:0.5px"><span>2</span></div>
<div class="a" style="left:799px;top:641px;width:1px;height:34px;border-left:1px dotted #d8d8d8"></div>
<div class="a t" style="left:799px;top:640px;width:54px;height:27px;text-align:center;justify-content:center;color:#222;font-size:13px;letter-spacing:1px;--ls:1px"><span><i>부</i><i>서</i></span></div>
<div class="a t" style="left:799px;top:675px;width:54px;height:28px;text-align:center;justify-content:center;color:#222;font-size:12px;line-height:20px;letter-spacing:0.5px;--ls:0.5px"><span>1</span></div>
<div class="a" style="left:853px;top:641px;width:1px;height:34px;border-left:1px dotted #d8d8d8"></div>
<div class="a t" style="left:853px;top:640px;width:53px;height:27px;text-align:center;justify-content:center;color:#222;font-size:13px;letter-spacing:1px;--ls:1px"><span><i>학</i><i>교</i></span></div>
<div class="a t" style="left:853px;top:675px;width:53px;height:28px;text-align:center;justify-content:center;color:#222;font-size:12px;line-height:20px;letter-spacing:0.5px;--ls:0.5px"><span>1</span></div>
<div class="a" style="left:906px;top:641px;width:1px;height:34px;border-left:1px dotted #d8d8d8"></div>
<div class="a t" style="left:906px;top:640px;width:53px;height:27px;text-align:center;justify-content:center;color:#222;font-size:13px;letter-spacing:1px;--ls:1px"><span><i>집</i><i>회</i><i>출</i><i>석</i></span></div>
<div class="a t" style="left:906px;top:675px;width:53px;height:28px;text-align:center;justify-content:center;color:#222;font-size:12px;line-height:20px;letter-spacing:0.5px;--ls:0.5px"><span>52</span></div>
<div class="a" style="left:959px;top:641px;width:1px;height:34px;border-left:1px dotted #d8d8d8"></div>
<div class="a t" style="left:959px;top:640px;width:53px;height:27px;text-align:center;justify-content:center;color:#222;font-size:13px;letter-spacing:1px;--ls:1px"><span><i>도</i><i>서</i></span></div>
<div class="a t" style="left:959px;top:675px;width:53px;height:28px;text-align:center;justify-content:center;color:#222;font-size:12px;line-height:20px;letter-spacing:0.5px;--ls:0.5px"><span>0</span></div>
<div class="a" style="left:1012px;top:641px;width:1px;height:34px;border-left:1px dotted #d8d8d8"></div>
<div class="a t" style="left:1012px;top:640px;width:52px;height:27px;text-align:center;justify-content:center;color:#222;font-size:13px;letter-spacing:1px;--ls:1px"><span><i>장</i><i>학</i><i>생</i></span></div>
<div class="a t" style="left:1012px;top:675px;width:52px;height:28px;text-align:center;justify-content:center;color:#222;font-size:12px;line-height:20px;letter-spacing:0.5px;--ls:0.5px"><span>0</span></div>
<div class="a t" style="left:415px;top:500px;width:28px;height:40px;text-align:center;justify-content:center;color:#222;font-size:12px"><span>1</span></div>
<svg class="a" style="left:446px;top:513px" width="12" height="12" viewBox="0 0 12 12"><rect x="0.5" y="0.5" width="11" height="11" rx="2" fill="#e6e6e6" stroke="#a8a8a8"/></svg>
<div class="a" id="photo" style="left:471px;top:431px;width:55px;height:78px;overflow:hidden"><svg width="55" height="78" viewBox="0 0 55 78" style="filter:blur(0.5px)"><rect width="55" height="78" fill="#2c2422"/><rect x="0" y="8" width="6" height="60" fill="#9a9898" opacity="0.8"/><path d="M27 8C14 8 7 18 7 32C7 46 14 60 26 68C36 63 46 51 48 37C50 21 41 8 27 8Z" fill="#f4dcd2"/><ellipse cx="49" cy="35" rx="3.5" ry="7" fill="#e9c3b3"/><path d="M27 6C18 6 10 11 7 24C11 15 18 11 26 10z" fill="#2c2422"/><path d="M27 0v9" stroke="#7a6358" stroke-width="1.2"/><path d="M10 28q4-2 8 0M29 28q4-2 9 0" stroke="#a07868" stroke-width="1.1" fill="none"/><ellipse cx="14" cy="32.5" rx="4" ry="1.7" fill="#5a3a30"/><ellipse cx="33" cy="32.5" rx="4.5" ry="1.7" fill="#5a3a30"/><path d="M24 38q-1 7 0 10q2 1 4 0" stroke="#d9aa98" stroke-width="1" fill="none"/><ellipse cx="25" cy="54.5" rx="7.5" ry="3.2" fill="#d98a88"/><ellipse cx="25" cy="54" rx="5.5" ry="1.6" fill="#fbf3ee"/><path d="M4 78C5 70 9 65 16 62C22 62 27 65 30 70L31 78Z" fill="#f0cfc2"/><path d="M30 78L29 70C33 69 37 72 40 78Z" fill="#e3b9a8"/></svg></div>
<div class="a t" style="left:459px;top:527px;width:76px;height:21px;text-align:center;justify-content:center;color:#2a8ce6;font-size:13px;text-decoration:underline;letter-spacing:1px;--ls:1px"><span style="text-decoration:underline"><i>김</i><i>경</i><i>미</i></span></div>
<div class="a t" style="left:459px;top:567px;width:76px;height:21px;text-align:center;justify-content:center;color:#222;font-size:13px;letter-spacing:1px;--ls:1px"><span><i>등</i><i>록</i><i>번</i><i>호</i></span></div>
<div class="a t" style="left:459px;top:587px;width:76px;height:21px;text-align:center;justify-content:center;color:#222;font-size:12px"><span>1823368</span></div>
<div class="a" style="left:1066px;top:491px;width:36px;height:18px;border:1px solid #9d9d9d;border-radius:2px;background:linear-gradient(#fff,#eee)"></div>
<div class="a t" style="left:1066px;top:491px;width:36px;height:18px;text-align:center;justify-content:center;color:#222;font-size:11px;font-weight:bold"><span><i>이</i><i>동</i></span></div>
<div class="a" style="left:1066px;top:529px;width:36px;height:18px;border:1px solid #9d9d9d;border-radius:2px;background:linear-gradient(#fff,#eee)"></div>
<div class="a t" style="left:1066px;top:529px;width:36px;height:18px;text-align:center;justify-content:center;color:#222;font-size:11px;font-weight:bold"><span><i>삭</i><i>제</i></span></div>
<div class="a" style="left:536px;top:704px;width:528px;height:33px;background:#f0f0f0"></div>
<div class="a t" style="left:535px;top:703px;width:77px;height:26px;text-align:center;justify-content:center;color:#222;font-size:13px;letter-spacing:1px;--ls:1px"><span><i>생</i><i>년</i><i>월</i><i>일</i></span></div>
<div class="a" style="left:612px;top:704px;width:1px;height:33px;border-left:1px dotted #d8d8d8"></div>
<div class="a t" style="left:612px;top:703px;width:75px;height:26px;text-align:center;justify-content:center;color:#222;font-size:13px;letter-spacing:1px;--ls:1px"><span><i>집</i><i>전</i><i>화</i></span></div>
<div class="a" style="left:687px;top:704px;width:1px;height:33px;border-left:1px dotted #d8d8d8"></div>
<div class="a t" style="left:687px;top:703px;width:76px;height:26px;text-align:center;justify-content:center;color:#222;font-size:13px;letter-spacing:1px;--ls:1px"><span><i>휴</i><i>대</i><i>폰</i></span></div>
<div class="a" style="left:763px;top:704px;width:1px;height:33px;border-left:1px dotted #d8d8d8"></div>
<div class="a t" style="left:763px;top:703px;width:301px;height:26px;text-align:center;justify-content:center;color:#222;font-size:13px;letter-spacing:1px;--ls:1px"><span><i>집</i><i>주</i><i>소</i></span></div>
<div class="a" style="left:536px;top:762px;width:528px;height:28px;background:#f0f0f0"></div>
<div class="a t" style="left:535px;top:762px;width:529px;height:26px;text-align:center;justify-content:center;color:#222;font-size:13px;letter-spacing:1px;--ls:1px"><span><i>가</i><i>족</i><i>사</i><i>항</i></span></div>
<div class="a" style="left:470px;top:775px;width:56px;height:15px;border:1px solid #9cc3dc"></div>
<div class="a" style="left:1114px;top:88px;width:1px;height:695px;background:#f0f0f0"></div>
</div>
</div>
</div>
</body></html>
